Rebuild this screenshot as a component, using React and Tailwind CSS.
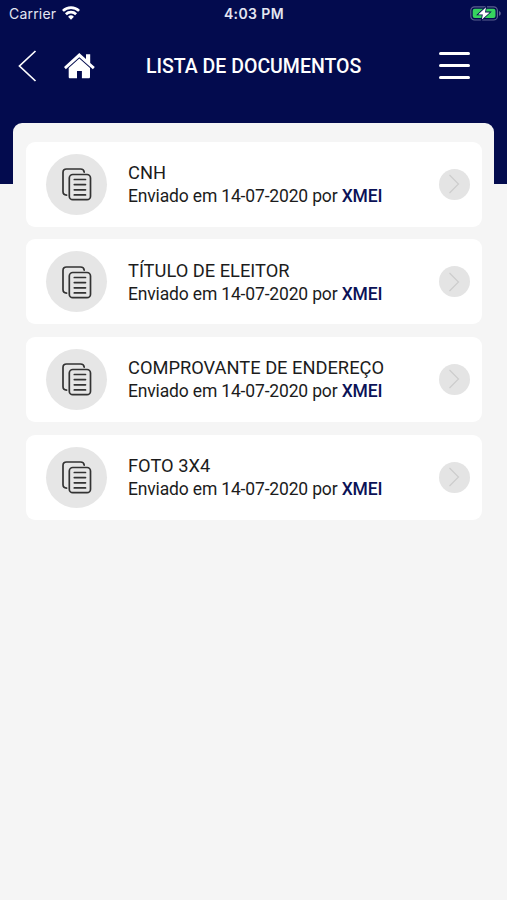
import React from "react";

const documents = ["CNH", "TÍTULO DE ELEITOR", "COMPROVANTE DE ENDEREÇO", "FOTO 3X4"];

function WifiIcon() {
  return (
    <svg className="ml-[6px] h-[15px] w-[18px]" viewBox="0 0 18 15" fill="none" stroke="#fff" strokeWidth="2.7">
      <path d="M0.9 4.9a11.6 11.6 0 0 1 16.2 0" />
      <path d="M3.9 8.2a7.3 7.3 0 0 1 10.2 0" />
      <path d="M9 13.8 6.1 10.8a4.1 4.1 0 0 1 5.8 0z" fill="#fff" stroke="none" />
    </svg>
  );
}

function BatteryIcon() {
  return (
    <svg className="h-[15px] w-[31px]" viewBox="0 0 31 15">
      <rect x="0.8" y="0.8" width="26.6" height="13.2" rx="3.8" fill="none" stroke="#5b608f" strokeWidth="1.2" />
      <path d="M29 5v4.8c1.1-.4 1.8-1.3 1.8-2.4S30.1 5.4 29 5z" fill="#5b608f" />
      <rect x="2.7" y="2.7" width="22.8" height="9.4" rx="2" fill="#36d35e" />
      <path d="M16 1.2 8.2 8.4h4.6L11.9 13.6l7.8-7.2h-4.7z" fill="#fff" stroke="#030b4e" strokeWidth="1.6" paintOrder="stroke" />
    </svg>
  );
}

function HomeIcon() {
  return (
    <svg className="ml-[27px] h-[26px] w-[31px]" viewBox="0 0 31 26" fill="#fff">
      <path d="M15.3 0 22 6V1.3h4.2V10l4.6 4.1-1.9 2.2L15.3 4.2 1.8 16.3 0 14.1z" />
      <path d="M15.3 5.4 26 14.9V24c0 .8-.5 1.3-1.3 1.3h-6.8V18h-4.9v7.3H6.1c-.9 0-1.4-.5-1.4-1.3v-9.1z" />
    </svg>
  );
}

function DocumentsIcon() {
  return (
    <svg className="ml-[2px] mt-px h-[33px] w-[30px]" viewBox="0 0 30 33" fill="none" stroke="#333" strokeWidth="1.7" strokeLinecap="round">
      <path d="M22.2 4.2C22 2.2 20.8 1 18.5 1h-14C2.2 1 1 2.2 1 4.5v19c0 2.3 1.2 3.5 3.6 3.6" />
      <rect x="7.3" y="6.5" width="21.2" height="25.2" rx="3.5" />
      <path d="M12.3 11.5h11.2M12.3 16.6h11.2M12.3 21.8h11.2M12.3 26.9h11.2" />
    </svg>
  );
}

function DocumentCard({ title }) {
  return (
    <li className="flex h-[85px] items-center rounded-[9px] bg-white pl-5 pr-3">
      <div className="flex size-[61px] items-center justify-center rounded-full bg-[#e6e6e6]">
        <DocumentsIcon />
      </div>
      <div className="ml-[21.5px] flex-1 whitespace-nowrap pt-px text-[#1c1c1c]">
        <h2 className="text-[18.3px] leading-[23px]">{title}</h2>
        <p className="text-[17.500px] leading-[24px] tracking-[-0.160px]">
          Enviado em 14-07-2020 por <span className="font-medium text-[#0b1257]">XMEI</span>
        </p>
      </div>
      <button className="flex size-[31px] items-center justify-center rounded-full bg-[#e4e4e4]" aria-label="Abrir">
        <svg className="h-[20px] w-[12px]" viewBox="0 0 12 20" fill="none" stroke="#cccccc" strokeWidth="1.100">
          <path d="m1.500 1 9 9-9 9" />
        </svg>
      </button>
    </li>
  );
}

export default function App() {
  return (
    <div className="min-h-[900px] w-[507px] overflow-hidden bg-[#f5f5f5] font-['Roboto',sans-serif]">
      <header className="h-[184px] bg-[#030b4e] text-white">
        <div className="grid h-[27px] grid-cols-3 items-center pl-[9px] pr-[6px] font-['Inter',sans-serif] text-[14px] text-[#e4e6f2]">
          <div className="flex items-center">
            <span className="tracking-[0.200px]">Carrier</span>
            <WifiIcon />
          </div>
          <span className="-ml-[2px] text-center font-semibold tracking-[0.400px]">4:03 PM</span>
          <div className="flex justify-end">
            <BatteryIcon />
          </div>
        </div>
        <nav className="flex h-[77px] items-center pl-[18px] pr-[37px]">
          <svg className="h-[32px] w-[19px]" viewBox="0 0 19 32" fill="none" stroke="#fff" strokeWidth="1.700">
            <path d="M17.500 1 1.500 16l16 15" />
          </svg>
          <HomeIcon />
          <h1 className="ml-[51px] flex-1 whitespace-nowrap pt-[2px] text-[19.500px] font-medium">LISTA DE DOCUMENTOS</h1>
          <div className="flex w-[31px] flex-col gap-[9px]">
            <span className="h-[3px] rounded-full bg-white" />
            <span className="h-[3px] rounded-full bg-white" />
            <span className="h-[3px] rounded-full bg-white" />
          </div>
        </nav>
      </header>
      <main className="-mt-[61px] ml-[13px] min-h-[777px] w-[481px] rounded-t-[9px] bg-[#f5f5f5] px-[12.500px] pt-[18.500px]">
        <ul className="flex flex-col gap-[12.700px]">
          {documents.map((title) => (
            <DocumentCard key={title} title={title} />
          ))}
        </ul>
      </main>
    </div>
  );
}
